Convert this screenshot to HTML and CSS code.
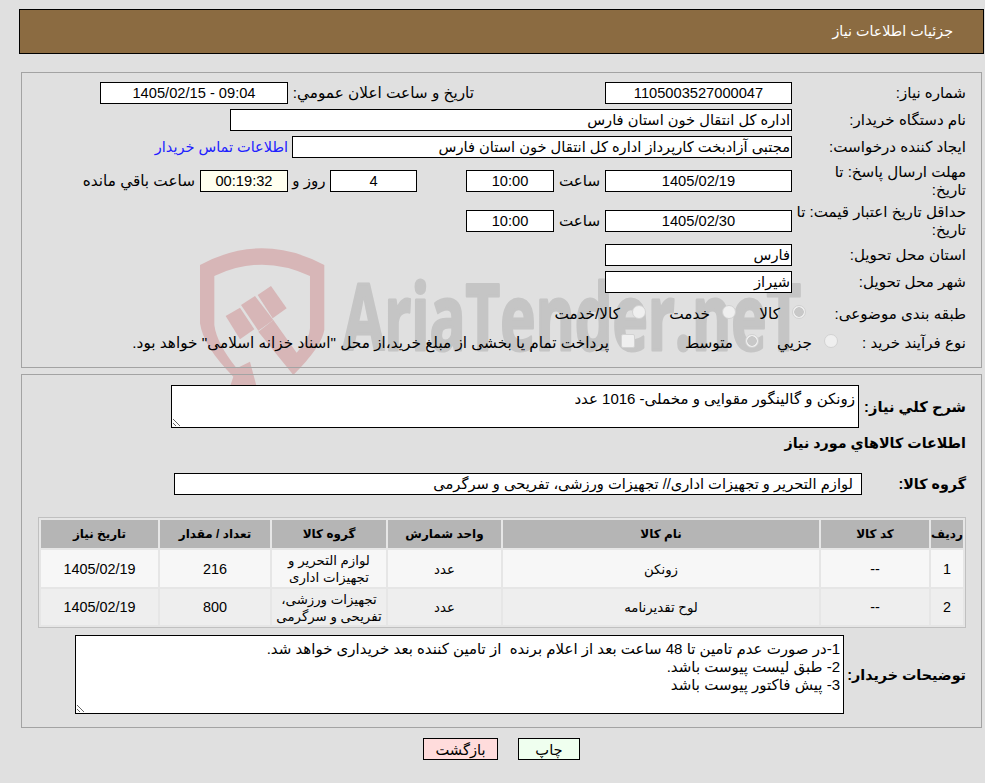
FILE: index.html
```html
<!DOCTYPE html>
<html lang="fa" dir="rtl">
<head>
<meta charset="utf-8">
<title>جزئیات اطلاعات نیاز</title>
<link rel="stylesheet" href="styles.css">
</head>
<body>
<svg class="watermark" width="985" height="783" viewBox="0 0 985 783" aria-hidden="true">
  <g transform="translate(190 240) scale(.3333)" fill="#d7b6b7">
    <path fill-rule="evenodd" d="M30 75Q215 -25 403 75V270Q395 320 310 405L205 275L250 240L320 338Q360 295 360 265V108Q215 40 73 108V255Q80 310 140 385L180 365L200 440H120L130 410Q40 320 30 250Z"/>
    <path d="M107 228L150 203L193 268L150 298Z"/>
    <path d="M153 195L195 168L250 240L205 272Z"/>
    <path d="M203 165L243 138L290 205L248 235Z"/>
  </g>
  <text class="wm-text" x="343" y="350" textLength="458" lengthAdjust="spacingAndGlyphs">AriaTender.neT</text>
</svg>

<div class="page">
  <header class="title-bar">جزئیات اطلاعات نیاز</header>

  <section class="panel panel-form">
    <div class="row">
      <div class="lbl">شماره نیاز:</div>
      <div class="box w187 center">1105003527000047</div>
      <div class="lbl2 w317">تاریخ و ساعت اعلان عمومي:</div>
      <div class="box w188 center">09:04 - 1405/02/15</div>
    </div>
    <div class="row">
      <div class="lbl">نام دستگاه خریدار:</div>
      <div class="box w562">اداره کل انتقال خون استان فارس</div>
    </div>
    <div class="row">
      <div class="lbl">ایجاد کننده درخواست:</div>
      <div class="box w500">مجتبی آزادبخت کارپرداز اداره کل انتقال خون استان فارس</div>
      <a class="link" href="#">اطلاعات تماس خریدار</a>
    </div>
    <div class="row tall-a">
      <div class="lbl">مهلت ارسال پاسخ: تا<br>تاریخ:</div>
      <div class="box w187 center">1405/02/19</div>
      <div class="unit w51">ساعت</div>
      <div class="box w88 center">10:00</div>
      <div class="w49"></div>
      <div class="box w87 center">4</div>
      <div class="unit w42">روز و</div>
      <div class="box w88 center timer">00:19:32</div>
      <div class="remain">ساعت باقي مانده</div>
    </div>
    <div class="row tall-b">
      <div class="lbl">حداقل تاریخ اعتبار قیمت: تا<br>تاریخ:</div>
      <div class="box w187 center">1405/02/30</div>
      <div class="unit w51">ساعت</div>
      <div class="box w88 center">10:00</div>
    </div>
    <div class="row">
      <div class="lbl">استان محل تحویل:</div>
      <div class="box w187">فارس</div>
    </div>
    <div class="row row-last-box">
      <div class="lbl">شهر محل تحویل:</div>
      <div class="box w187">شیراز</div>
    </div>
    <div class="row row-opt row-cat">
      <div class="lbl">طبقه بندی موضوعی:</div>
      <label class="opt w70 first"><input type="radio" name="cat" checked disabled><span>کالا</span></label>
      <label class="opt w90"><input type="radio" name="cat" disabled><span>خدمت</span></label>
      <label class="opt"><input type="radio" name="cat" disabled><span>کالا/خدمت</span></label>
    </div>
    <div class="row row-opt row-buy">
      <div class="lbl lbl-buy">نوع فرآیند خرید :</div>
      <label class="opt w79"><input type="radio" name="buy" disabled><span>جزیي</span></label>
      <label class="opt w124"><input type="radio" name="buy" checked disabled><span>متوسط</span></label>
      <label class="opt"><input type="checkbox" disabled><span>پرداخت تمام یا بخشی از مبلغ خرید،از محل "اسناد خزانه اسلامی" خواهد بود.</span></label>
    </div>
  </section>

  <section class="panel panel-items">
    <div class="desc-row">
      <div class="strong w107">شرح کلي نیاز:</div>
      <textarea class="area area-desc" readonly>زونکن و گالینگور مقوایی و مخملی- 1016 عدد</textarea>
    </div>
    <h2 class="strong heading">اطلاعات کالاهاي مورد نیاز</h2>
    <div class="group-row">
      <div class="strong w104">گروه کالا:</div>
      <div class="box w688 pad8">لوازم التحریر و تجهیزات اداری// تجهیزات ورزشی، تفریحی و سرگرمی</div>
    </div>
    <table class="items">
      <colgroup>
        <col class="c1"><col class="c2"><col class="c3"><col class="c4"><col class="c5"><col class="c6"><col class="c7">
      </colgroup>
      <thead>
        <tr><th>ردیف</th><th>کد کالا</th><th>نام کالا</th><th>واحد شمارش</th><th>گروه کالا</th><th>تعداد / مقدار</th><th>تاریخ نیاز</th></tr>
      </thead>
      <tbody>
        <tr><td class="num">1</td><td class="num">--</td><td>زونکن</td><td>عدد</td><td>لوازم التحریر و تجهیزات اداری</td><td class="num">216</td><td class="num">1405/02/19</td></tr>
        <tr><td class="num">2</td><td class="num">--</td><td>لوح تقدیرنامه</td><td>عدد</td><td>تجهیزات ورزشی، تفریحی و سرگرمی</td><td class="num">800</td><td class="num">1405/02/19</td></tr>
      </tbody>
    </table>
    <div class="notes-row">
      <div class="strong w122">توضیحات خریدار:</div>
      <textarea class="area area-notes" readonly>1-در صورت عدم تامین تا 48 ساعت بعد از اعلام برنده  از تامین کننده بعد خریداری خواهد شد.
2- طبق لیست پیوست باشد.
3- پیش فاکتور پیوست باشد</textarea>
    </div>
  </section>

  <div class="actions">
    <button class="btn btn-print" type="button">چاپ</button>
    <button class="btn btn-back" type="button">بازگشت</button>
  </div>
</div>
</body>
</html>
```

FILE: styles.css
```css
* { box-sizing: border-box; }
html, body { margin: 0; padding: 0; }
body {
  width: 985px;
  height: 783px;
  overflow: hidden;
  background: #e0e0e0;
  color: #000;
  font-family: "Liberation Sans", "DejaVu Sans", sans-serif;
  font-size: 14.67px;
  position: relative;
}
.watermark { position: absolute; left: 0; top: 0; z-index: 0; direction: ltr; }
.wm-text {
  direction: ltr;
  font-family: "Open Sans", sans-serif;
  font-weight: 700;
  font-size: 92px;
  fill: #c5c5c5;
  stroke: #c5c5c5;
  stroke-width: 3px;
  stroke-linejoin: round;
}
.page { position: relative; z-index: 1; padding: 9px 1px 0 19px; }

.title-bar {
  height: 45px;
  line-height: 43px;
  background: #8b6b41;
  border: 1px solid #000;
  color: #fff;
  padding-right: 30px;
  font-size: 14.3px;
}
.panel {
  border: 1px solid #a3a3a3;
  margin-left: 2px;
  margin-right: 2px;
  padding-right: 15px;
}
.panel-form { height: 296px; margin-top: 18px; padding-top: 9px; }
.panel-items { height: 354px; margin-top: 6px; padding-top: 10px; padding-left: 16px; }

.row { display: flex; align-items: center; height: 22px; margin-bottom: 5px; }
.tall-a { height: 38px; margin-top: -1px; margin-bottom: 2px; }
.tall-b { height: 38px; margin-bottom: 4px; }
.row-last-box { margin-bottom: 10px; }
.row-cat { margin-bottom: 7px; }

.lbl { width: 174px; flex: none; line-height: 18px; font-size: 15.1px; white-space: nowrap; }
.lbl-buy { width: 128px; }
.box {
  height: 22px;
  line-height: 20px;
  background: #fff;
  border: 1px solid #000;
  padding: 0 1px;
  flex: none;
  white-space: nowrap;
  overflow: hidden;
}
.center { text-align: center; }
.pad8 { padding-right: 8px; }
.timer { background: #ffffef; }
.w187 { width: 187px; }
.w188 { width: 188px; }
.w562 { width: 562px; }
.w500 { width: 500px; }
.w88 { width: 88px; }
.w87 { width: 87px; }
.w688 { width: 688px; }
.w317 { width: 317px; flex: none; padding-right: 131px; white-space: nowrap; font-size: 15.3px; }
.w51 { width: 51px; }
.w49 { width: 49px; flex: none; }
.w42 { width: 42px; }
.unit { flex: none; text-align: center; font-size: 15.1px; }
.link { color: #2020ff; text-decoration: none; margin-right: 4px; white-space: nowrap; font-size: 14.5px; }
.remain { margin-right: 5px; white-space: nowrap; font-size: 15.3px; }

.opt { display: flex; align-items: center; flex: none; white-space: nowrap; font-size: 15.3px; }
.first { margin-right: -14px; }
.w70 { width: 70px; }
.w90 { width: 90px; }
.w79 { width: 79px; }
.w124 { width: 124px; }
.opt input {
  appearance: none;
  margin: 0 0 4px 12px;
  width: 14px;
  height: 14px;
  border: 1px solid #d2d2d2;
  border-radius: 50%;
  background: #efefef;
  flex: none;
}
.opt input:checked { background: radial-gradient(circle, #c8c8c8 0 4.5px, #efefef 5px); }
.opt input[type="checkbox"] { border-radius: 2px; }

.strong { font-weight: 700; font-size: 14.3px; flex: none; }
.w107 { width: 107px; font-size: 14.67px; }
.w104 { width: 104px; }
.w122 { width: 122px; }
.heading { height: 20px; line-height: 20px; margin: 5px 0 0; }
.desc-row, .group-row, .notes-row { display: flex; align-items: center; }
.group-row { margin-top: 20px; height: 22px; }

.area {
  display: block;
  flex: none;
  background: #fff;
  border: 1px solid #000;
  border-radius: 0;
  margin: 0;
  padding: 4px 3px 0;
  font: inherit;
  font-size: 15px;
  line-height: 18px;
  color: #000;
  outline: none;
  overflow: hidden;
}
.area-desc { width: 688px; height: 43px; }
.area-notes { width: 769px; height: 79px; }
.notes-row { margin-top: 7px; }

.items {
  width: 928px;
  height: 111px;
  margin-top: 22px;
  table-layout: fixed;
  border: 1px solid #c0c0c0;
  border-spacing: 2px;
  background: #e6e6e6;
  font-size: 13.3px;
}
.c1 { width: 32px; }
.c2 { width: 108px; }
.c3 { width: 316px; }
.c4 { width: 113px; }
.c5 { width: 114px; }
.c6 { width: 110px; }
.c7 { width: 117px; }
.items th {
  height: 28px;
  background: #b5b5b5;
  font-size: 12px;
  padding: 0;
  white-space: nowrap;
}
.items td {
  text-align: center;
  padding: 1px 2px 0;
  line-height: 17px;
}
.items td.num { font-size: 14.4px; }
.items tbody tr:nth-child(1) td { background: #f7f7f7; height: 37px; }
.items tbody tr:nth-child(2) td { background: #eeeeee; height: 36px; }

.actions { display: flex; justify-content: center; gap: 20px; margin-top: 10px; }
.btn {
  height: 22px;
  border: 1px solid #000;
  border-radius: 0;
  font: inherit;
  padding: 0;
  color: #000;
}
.btn-print { width: 62px; background: #efffef; }
.btn-back { width: 75px; background: #ffdcdc; }
```
